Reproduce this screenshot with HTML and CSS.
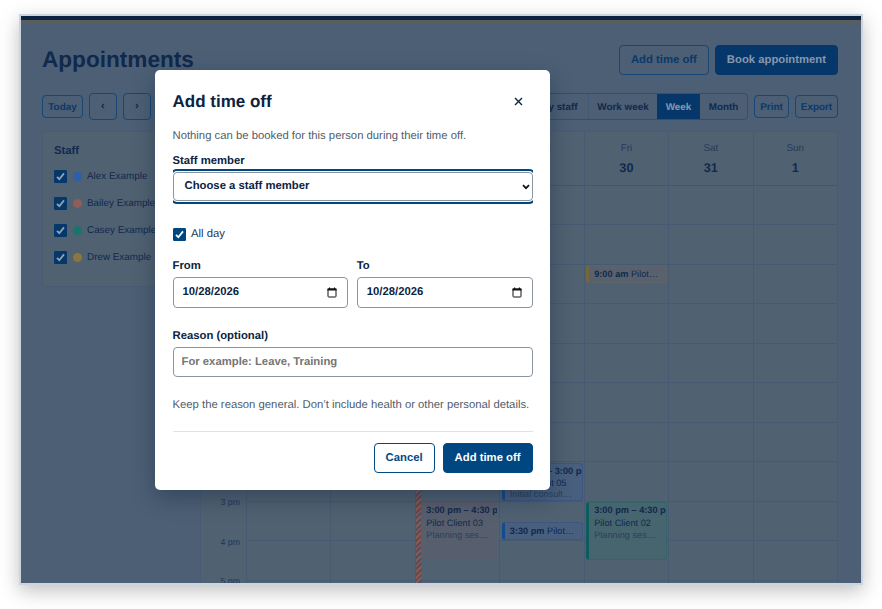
FILE: index.html
```html
<!DOCTYPE html>
<html lang="en">
<head>
    <meta charset="UTF-8">
    <meta name="viewport" content="width=device-width, initial-scale=1.0">
    <title>Appointments</title>
    <link rel="stylesheet" href="styles.css">
</head>
<body>
    <svg class="defs" width="0" height="0">
        <symbol id="check" viewBox="0 0 13 13">
            <rect width="13" height="13" rx="1.2" fill="currentColor"/>
            <path d="M3 6.8l2.3 2.4 4.7-5.8" fill="none" stroke="var(--tick)" stroke-width="1.8"/>
        </symbol>
        <symbol id="calendar" viewBox="0 0 10 11">
            <path d="M1 2h8v7.3a.7.7 0 0 1-.7.7H1.7a.7.7 0 0 1-.7-.7z" fill="none" stroke="#111" stroke-width="1"/>
            <path d="M.5 1.5h9v2h-9zM2 .4h1.1v1.5H2zM6.9.4H8v1.5H6.9z" fill="#111"/>
        </symbol>
    </svg>

    <div class="frame">
        <div class="topbar"></div>
        <main class="page">
            <header class="page-head">
                <h1>Appointments</h1>
                <div class="actions">
                    <button class="btn">Add time off</button>
                    <button class="btn primary">Book appointment</button>
                </div>
            </header>

            <div class="toolbar">
                <button class="btn small today">Today</button>
                <button class="btn arrow">‹</button>
                <button class="btn arrow">›</button>
                <div class="views">
                    <span class="view by-staff">Day by staff</span>
                    <span class="view work">Work week</span>
                    <span class="view active">Week</span>
                    <span class="view month">Month</span>
                </div>
                <button class="btn small print">Print</button>
                <button class="btn small export">Export</button>
            </div>

            <div class="columns">
                <aside class="staff">
                    <h2>Staff</h2>
                    <div class="person"><svg class="box"><use href="#check"/></svg><i class="dot blue"></i>Alex Example</div>
                    <div class="person"><svg class="box"><use href="#check"/></svg><i class="dot red"></i>Bailey Example</div>
                    <div class="person"><svg class="box"><use href="#check"/></svg><i class="dot green"></i>Casey Example</div>
                    <div class="person"><svg class="box"><use href="#check"/></svg><i class="dot gold"></i>Drew Example</div>
                </aside>

                <section class="calendar">
                    <div class="cal-head">
                        <div class="corner"></div>
                        <div class="day-name">Mon<b>26</b></div>
                        <div class="day-name">Tue<b>27</b></div>
                        <div class="day-name">Wed<b>28</b></div>
                        <div class="day-name">Thu<b>29</b></div>
                        <div class="day-name">Fri<b>30</b></div>
                        <div class="day-name">Sat<b>31</b></div>
                        <div class="day-name">Sun<b>1</b></div>
                    </div>
                    <div class="cal-body">
                        <div class="hours">
                            <span></span>
                            <span>8 am</span>
                            <span>9 am</span>
                            <span>10 am</span>
                            <span>11 am</span>
                            <span>12 pm</span>
                            <span>1 pm</span>
                            <span>2 pm</span>
                            <span>3 pm</span>
                            <span>4 pm</span>
                            <span>5 pm</span>
                        </div>
                        <div class="day"></div>
                        <div class="day"></div>
                        <div class="day off">
                            <div class="event red from-3pm long"><b>3:00 pm – 4:30 pm</b><span>Pilot Client 03</span><em>Planning session</em></div>
                        </div>
                        <div class="day">
                            <div class="event blue from-2pm"><b>2:00 pm – 3:00 pm</b><span>Pilot Client 05</span><em>Initial consultation</em></div>
                            <div class="event blue from-330pm short"><b>3:30 pm</b> Pilot Client 04</div>
                        </div>
                        <div class="day">
                            <div class="event gold from-9am short"><b>9:00 am</b> Pilot Client 01</div>
                            <div class="event green from-3pm long"><b>3:00 pm – 4:30 pm</b><span>Pilot Client 02</span><em>Planning session</em></div>
                        </div>
                        <div class="day"></div>
                        <div class="day"></div>
                    </div>
                </section>
            </div>
        </main>
    </div>

    <div class="modal">
        <div class="modal-head">
            <h2>Add time off</h2>
            <svg class="close" viewBox="0 0 9 9"><path d="M1 1l7 7M8 1l-7 7"/></svg>
        </div>
        <p class="intro">Nothing can be booked for this person during their time off.</p>

        <label class="label">Staff member</label>
        <div class="select-wrap">
            <div class="select">
                <span>Choose a staff member</span>
                <svg class="caret" viewBox="0 0 8 6"><path d="M1 1.2l3 3 3-3"/></svg>
            </div>
        </div>

        <div class="all-day"><svg class="box"><use href="#check"/></svg>All day</div>

        <div class="dates">
            <div>
                <label class="label">From</label>
                <div class="field date">10/28/2026<svg class="cal-icon"><use href="#calendar"/></svg></div>
            </div>
            <div>
                <label class="label">To</label>
                <div class="field date">10/28/2026<svg class="cal-icon"><use href="#calendar"/></svg></div>
            </div>
        </div>

        <label class="label">Reason (optional)</label>
        <input class="field reason" type="text" placeholder="For example: Leave, Training">
        <p class="hint">Keep the reason general. Don’t include health or other personal details.</p>

        <div class="modal-foot">
            <button class="btn">Cancel</button>
            <button class="btn primary">Add time off</button>
        </div>
    </div>
</body>
</html>
```
FILE: styles.css
```css
* {
    box-sizing: border-box;
}
body {
    margin: 0;
    height: 609px;
    overflow: hidden;
    background: #fff;
    font-family: "Liberation Sans", Arial, sans-serif;
    font-size: 11.3px;
    text-rendering: geometricPrecision;
    color: #0b2341;
    --tick: #fff;
}
h1, h2, p {
    margin: 0;
}
.defs {
    position: absolute;
}

/* page behind the dialog */
.frame {
    --tick: #93a3b5;
    width: 844px;
    height: 571px;
    margin: 14px 0 0 19px;
    border: 2px solid #cbd4e0;
    background: #4c5f75;
    color: #10294c;
    overflow: hidden;
    box-shadow: 0 6px 18px rgba(0, 0, 0, .25);
}
.topbar {
    height: 7px;
    background: #0a2342;
    border-bottom: 3px solid #5a5e5f;
}
.page {
    padding: 22px 23px 0 21px;
}
.page-head {
    display: flex;
    justify-content: space-between;
    height: 48px;
}
h1 {
    font-size: 22.6px;
    line-height: 30px;
}
.actions {
    display: flex;
    gap: 6px;
}
.btn {
    height: 30px;
    padding: 0 11px 1px;
    border: 1px solid #004a85;
    border-radius: 4px;
    background: transparent;
    color: #004a85;
    font: bold 11.3px "Liberation Sans", Arial, sans-serif;
    text-rendering: inherit;
    white-space: nowrap;
}
.btn.primary {
    background: #004680;
    color: #fff;
}
.frame .btn {
    border-color: #174677;
    color: #0b3869;
}
.frame .btn.primary {
    background: #06376b;
    border-color: #06376b;
    color: #8698ad;
}
.toolbar {
    display: flex;
    align-items: center;
    height: 27px;
}
.toolbar .btn.small {
    height: 23px;
    padding: 1px 0 0;
    font-size: 9.9px;
}
.toolbar .today {
    width: 41px;
    margin-right: 6px;
}
.toolbar .arrow {
    width: 28px;
    height: 27px;
    padding: 0 0 1px;
    margin-right: 6px;
    color: #10294c;
}
.toolbar .print {
    width: 35px;
    margin: 0 6px;
}
.toolbar .export {
    width: 43px;
}
.views {
    display: flex;
    height: 27px;
    margin-left: auto;
    border: 1px solid #364e6a;
    border-radius: 4px;
    font-size: 9.9px;
    font-weight: bold;
    line-height: 27px;
    text-align: center;
    overflow: hidden;
}
.view.by-staff {
    width: 77px;
}
.view.work {
    width: 69px;
    border-left: 1px solid #435872;
}
.view.active {
    width: 43px;
    background: #06376b;
    color: #8698ad;
}
.view.month {
    width: 47px;
}
.columns {
    display: grid;
    grid-template-columns: 147px 638px;
    gap: 11px;
    margin-top: 11px;
}
.staff {
    height: 156px;
    padding: 12px 0 0 11px;
    border: 1px solid #495c73;
    border-radius: 4px;
    background: #506172;
    font-size: 9.9px;
    white-space: nowrap;
}
.staff h2 {
    height: 19.5px;
    font-size: 11.3px;
    line-height: 14px;
}
.person {
    display: flex;
    align-items: center;
    height: 26.8px;
}
.box {
    width: 13px;
    height: 13px;
    color: #06376b;
}
.dot {
    width: 9px;
    height: 9px;
    margin: 0 5px 0 6px;
    border-radius: 50%;
}
.dot.blue { background: #2e5fac; }
.dot.red { background: #8e5e5b; }
.dot.green { background: #19746d; }
.dot.gold { background: #8c7541; }

/* calendar, one hour = 39.5px */
.calendar {
    border: 1px solid #495c73;
    background: #506172;
}
.cal-head, .cal-body {
    display: grid;
    grid-template-columns: 45px repeat(7, 1fr);
}
.cal-head {
    height: 54px;
    border-bottom: 1px solid #42566f;
}
.day-name {
    padding-top: 10px;
    border-left: 1px solid #465a72;
    color: #243b58;
    font-size: 9.9px;
    line-height: 13px;
    text-align: center;
}
.day-name b {
    display: block;
    margin-top: 6px;
    color: #10294c;
    font-size: 12.7px;
    line-height: 14px;
}
.hours span {
    display: block;
    height: 39.5px;
    padding-right: 6px;
    color: #1e3653;
    font-size: 8.8px;
    line-height: 10px;
    text-align: right;
    transform: translateY(-5px);
}
.day {
    display: grid;
    grid-template-rows: repeat(22, 19.75px);
    grid-template-columns: 100%;
    min-width: 0;
    padding: 0 1px 0 1.5px;
    border-left: 1px solid #465a72;
    background: repeating-linear-gradient(#506172 0 38.5px, #465a72 38.5px 39.5px);
}
.day.off {
    padding-left: 5.5px;
    background:
        repeating-linear-gradient(135deg, #8a5850 0 2px, #554f5c 2px 4px) 0 0 / 5.5px 100% no-repeat,
        repeating-linear-gradient(#506172 0 38.5px, #465a72 38.5px 39.5px);
}
.event {
    margin-bottom: 1.5px;
    padding: 1px 0 0 5px;
    border: 1px solid #48597a;
    border-left-width: 3px;
    border-radius: 3px;
    font-size: 9.2px;
    line-height: 12.5px;
    white-space: nowrap;
    overflow: hidden;
}
.event span, .event em {
    display: block;
    padding-right: 8px;
    font-style: normal;
    overflow: hidden;
    text-overflow: ellipsis;
}
.event em {
    color: #2a405b;
}
.event.short {
    padding-top: 2px;
    padding-right: 7px;
    text-overflow: ellipsis;
}
.event.blue { background: #485f7e; border-color: #3e5680; border-left-color: #164a8f; }
.event.red { background: #575e6d; border-color: #615b6b; border-left: 0; }
.event.green { background: #46656f; border-color: #34656a; border-left-color: #0d5c5d; }
.event.gold { background: #59626c; border-color: #5c636a; border-left-color: #76663c; }
.from-9am { grid-row: 5 / 6; }
.from-2pm { grid-row: 15 / 17; }
.from-3pm { grid-row: 17 / 20; }
.from-330pm { grid-row: 18 / 19; }
.event.from-2pm em {
    margin-top: -2px;
}

/* dialog */
.modal {
    position: absolute;
    left: 155px;
    top: 70px;
    width: 395px;
    height: 420px;
    padding: 21px 17.5px 0;
    border-radius: 5px;
    background: #fff;
    box-shadow: 0 8px 22px rgba(5, 25, 48, .35);
}
.modal-head {
    display: flex;
    justify-content: space-between;
    align-items: center;
    height: 22px;
    padding-right: 10px;
}
.modal-head h2 {
    font-size: 17px;
}
.close {
    width: 9px;
    height: 9px;
    margin-bottom: 2px;
    fill: none;
    stroke: #0b2341;
    stroke-width: 1.4;
}
.intro, .hint {
    color: #505c6b;
    line-height: 14px;
}
.intro {
    margin-top: 16px;
}
.label {
    display: block;
    font-weight: bold;
    line-height: 14px;
}
.intro + .label {
    margin-top: 11px;
}
.select-wrap {
    margin-top: 1px;
    padding: 3px 0;
    overflow: hidden;
}
.select {
    display: flex;
    align-items: center;
    justify-content: space-between;
    height: 29px;
    padding: 0 2px 1px 11px;
    border: 1px solid #8a959f;
    border-radius: 4px;
    outline: 2px solid #004680;
    outline-offset: 1px;
    font-weight: bold;
}
.caret {
    width: 8px;
    height: 6px;
    margin-top: 1px;
    fill: none;
    stroke: #111;
    stroke-width: 1.7;
}
.all-day {
    display: flex;
    align-items: center;
    gap: 5.5px;
    height: 14px;
    margin-top: 23px;
    color: #26384e;
}
.all-day .box {
    color: #004680;
    margin-top: 1px;
}
.dates {
    display: grid;
    grid-template-columns: 1fr 1fr;
    gap: 8.5px;
    margin: 18px 0 21px;
}
.field {
    width: 100%;
    height: 30px;
    margin-top: 4px;
    padding: 0 8px 1px;
    border: 1px solid #8a959f;
    border-radius: 4px;
    background: #fff;
    font: bold 11.3px "Liberation Sans", Arial, sans-serif;
    text-rendering: inherit;
}
.field.date {
    display: flex;
    justify-content: space-between;
    align-items: center;
    height: 31px;
    padding: 0 9px 1px;
}
.cal-icon {
    width: 10px;
    height: 11px;
    margin: 1px 1px 0 0;
}
.field::placeholder {
    color: #757575;
}
.hint {
    margin-top: 21px;
}
.modal-foot {
    display: flex;
    justify-content: flex-end;
    gap: 8px;
    margin-top: 19px;
    padding-top: 11px;
    border-top: 1px solid #dfe2e5;
}
```
